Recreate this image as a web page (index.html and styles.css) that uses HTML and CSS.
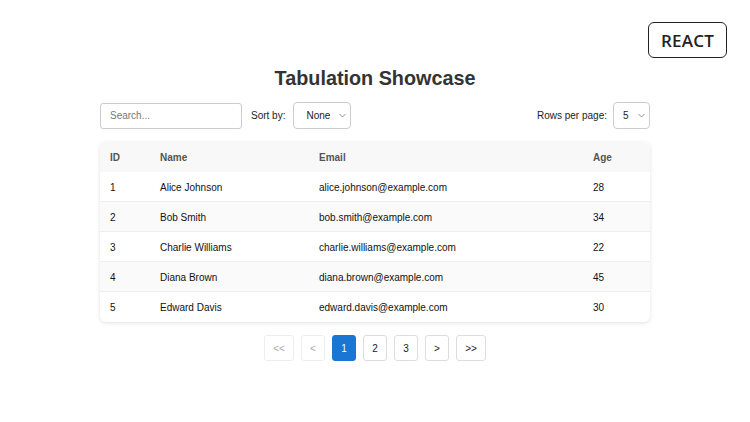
FILE: index.html
```html
<!DOCTYPE html>
<html>
<head>
<meta charset="utf-8">
<link rel="stylesheet" href="styles.css">
</head>
<body>
<div class="topbar"><div class="badge">REACT</div></div>
<main class="wrap">
  <h1 class="title">Tabulation Showcase</h1>
  <div class="controls">
    <div class="left">
      <input class="search" type="text" placeholder="Search...">
      <label class="lbl">Sort by:</label>
      <div class="select sort"><span>None</span><svg width="7" height="5" viewBox="0 0 7 5"><path d="M0.5 1 L3.5 4 L6.5 1" fill="none" stroke="#888" stroke-width="0.9"/></svg></div>
    </div>
    <div class="right">
      <label class="lbl">Rows per page:</label>
      <div class="select rows"><span>5</span><svg width="7" height="5" viewBox="0 0 7 5"><path d="M0.5 1 L3.5 4 L6.5 1" fill="none" stroke="#888" stroke-width="0.9"/></svg></div>
    </div>
  </div>
  <div class="table">
    <div class="row head"><div>ID</div><div>Name</div><div>Email</div><div>Age</div></div>
    <div class="row"><div>1</div><div>Alice Johnson</div><div>alice.johnson@example.com</div><div>28</div></div>
    <div class="row alt"><div>2</div><div>Bob Smith</div><div>bob.smith@example.com</div><div>34</div></div>
    <div class="row"><div>3</div><div>Charlie Williams</div><div>charlie.williams@example.com</div><div>22</div></div>
    <div class="row alt"><div>4</div><div>Diana Brown</div><div>diana.brown@example.com</div><div>45</div></div>
    <div class="row"><div>5</div><div>Edward Davis</div><div>edward.davis@example.com</div><div>30</div></div>
  </div>
  <div class="pager">
    <button class="pg dis wide">&lt;&lt;</button>
    <button class="pg dis">&lt;</button>
    <button class="pg active">1</button>
    <button class="pg">2</button>
    <button class="pg">3</button>
    <button class="pg">&gt;</button>
    <button class="pg wide">&gt;&gt;</button>
  </div>
</main>
</body>
</html>
```
FILE: styles.css
```css
html, body { margin: 0; padding: 0; background: #fff; }
body { font-family: "Liberation Sans", Arial, sans-serif; color: #111; width: 750px; height: 422px; overflow: hidden; }
.topbar { display: flex; justify-content: flex-end; padding: 22px 23px 0 0; height: 36px; }
.badge { width: 77px; height: 34px; border: 1px solid #222; border-radius: 6px; display: flex; align-items: center; justify-content: center; font-family: "Open Sans", "Noto Sans", sans-serif; font-weight: 600; font-size: 17px; color: #222; letter-spacing: 0.2px; }
.wrap { width: 550px; margin: 0 auto; }
.title { margin: 8px 0 0; text-align: center; font-size: 19.8px; font-weight: bold; color: #333; line-height: 24px; }
.controls { display: flex; justify-content: space-between; align-items: center; margin-top: 12px; height: 27px; }
.left, .right { display: flex; align-items: center; }
.search { box-sizing: border-box; width: 142px; height: 26px; border: 1px solid #ccc; border-radius: 3px; padding: 0 9px; font-family: inherit; font-size: 10px; color: #333; outline: none; }
.search::placeholder { color: #777; }
.lbl { font-size: 10px; color: #222; margin: 0 8px 0 9px; }
.select { box-sizing: border-box; height: 27px; border: 1px solid #ccc; border-radius: 4px; display: flex; align-items: center; justify-content: space-between; font-size: 10px; color: #222; }
.sort { width: 58px; padding: 0 4px 0 12px; }
.rows { width: 37px; padding: 0 4px 0 9px; margin-right: 0; }
.right .lbl { margin: 0 6px 0 0; }
.table { margin-top: 13px; border-radius: 6px; box-shadow: 0 1px 4px rgba(0,0,0,0.12); overflow: hidden; }
.row { display: grid; grid-template-columns: 50px 159px 274px 1fr; height: 30px; align-items: center; font-size: 10px; color: #111; border-bottom: 1px solid #eee; box-sizing: border-box; padding: 1px 0 0 10px; }
.row:last-child { border-bottom: none; }
.head { background: #f8f8f8; color: #555; font-weight: bold; border-bottom: none; padding-top: 0; }
.alt { background: #fafafa; }
.pager { display: flex; justify-content: center; gap: 7px; margin-top: 13px; }
.pg { box-sizing: border-box; width: 24px; height: 26px; border: 1px solid #ddd; border-radius: 3px; background: #fff; font-family: inherit; font-size: 10px; color: #222; padding: 0; }
.pg.wide { width: 30px; }
.pg.dis { color: #aaa; border-color: #eee; }
.pg.active { background: #1976d2; border-color: #1976d2; color: #fff; }
```
